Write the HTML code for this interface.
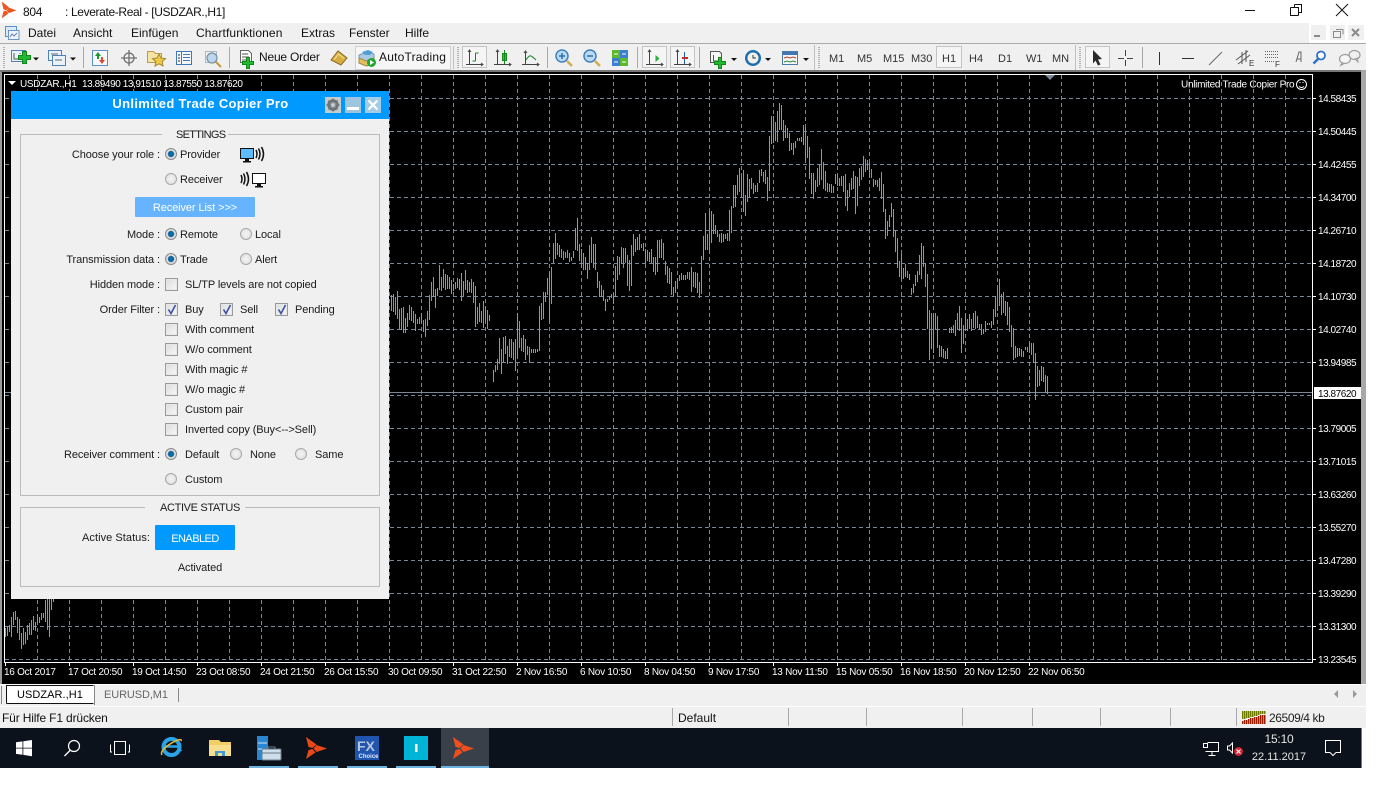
<!DOCTYPE html>
<html><head><meta charset="utf-8"><title>Leverate-Real</title>
<style>
html,body{margin:0;padding:0;background:#fff}
body{width:1400px;height:806px;position:relative;overflow:hidden;font-family:"Liberation Sans",Arial,sans-serif;font-size:12px;color:#111}
.a{position:absolute}
.t{position:absolute;white-space:nowrap;line-height:14px}
.p{font-size:11px;color:#1a1a1a;letter-spacing:-.1px}
.cb{position:absolute;width:11px;height:11px;border:1px solid #9a9a9a;background:linear-gradient(135deg,#dcdcdc,#f8f8f8);box-shadow:inset 0 0 0 1px #e8e8e8}
.r{position:absolute;width:10px;height:10px;border:1px solid #a8a8a8;border-radius:50%;background:radial-gradient(circle at 50% 50%,#f4f4f4,#dcdcdc)}
.r.on{border-color:#8a8a8a;background:radial-gradient(circle at 50% 50%,#0f76b8 0,#0a5f98 38%,#dfdfdf 50%,#dcdcdc 100%)}
svg{position:absolute;left:0;top:0}
svg text{font-family:"Liberation Sans",Arial,sans-serif}
.tf{font-size:11px;color:#333}
</style></head><body>
<!-- window backgrounds -->
<div class="a" style="left:0;top:23px;width:1309px;height:21px;background:#f0f0f0"></div>
<div class="a" style="left:0;top:43px;width:1366px;height:27px;background:#f0f0f0;border-top:1px solid #aaa;box-sizing:border-box"></div>
<div class="a" style="left:0;top:70px;width:1366px;height:2px;background:#777"></div>
<div class="a" style="left:0;top:72px;width:1366px;height:612px;background:#000"></div>
<div class="a" style="left:0;top:72px;width:2px;height:612px;background:#9a9a9a"></div>
<div class="a" style="left:1361px;top:70px;width:5px;height:615px;background:#a8a8a8"></div>
<div class="a" style="left:0;top:684px;width:1366px;height:22px;background:#f0f0f0;border-top:1px solid #fff;box-sizing:border-box"></div>
<div class="a" style="left:0;top:706px;width:1366px;height:22px;background:#f0f0f0;border-top:1px solid #fff;box-sizing:border-box"></div>
<div class="a" style="left:0;top:728px;width:1362px;height:40px;background:#0c121c"></div>
<div class="a" style="left:1361px;top:728px;width:1px;height:40px;background:#777"></div>

<!-- chart -->
<svg width="1400" height="806" viewBox="0 0 1400 806">
<g stroke="#778899" stroke-width="1" stroke-dasharray="4 3" fill="none">
<path d="M5 98.5H1312M5 131.5H1312M5 164.5H1312M5 197.5H1312M5 230.5H1312M5 263.5H1312M5 296.5H1312M5 329.5H1312M5 362.5H1312M5 395.5H1312M5 428.5H1312M5 461.5H1312M5 494.5H1312M5 527.5H1312M5 560.5H1312M5 593.5H1312M5 626.5H1312M5 659.5H1312"/>
<path d="M37.5 75V662M69.5 75V662M101.5 75V662M133.5 75V662M165.5 75V662M197.5 75V662M229.5 75V662M261.5 75V662M293.5 75V662M325.5 75V662M357.5 75V662M389.5 75V662M421.5 75V662M453.5 75V662M485.5 75V662M517.5 75V662M549.5 75V662M581.5 75V662M613.5 75V662M645.5 75V662M677.5 75V662M709.5 75V662M741.5 75V662M773.5 75V662M805.5 75V662M837.5 75V662M869.5 75V662M901.5 75V662M933.5 75V662M965.5 75V662M997.5 75V662M1029.5 75V662M1061.5 75V662M1093.5 75V662M1125.5 75V662M1157.5 75V662M1189.5 75V662M1221.5 75V662M1253.5 75V662M1285.5 75V662"/>
</g>
<path stroke="#778899" stroke-width="1" d="M4 392.5H1312" fill="none"/>
<path stroke="#33e01f" stroke-width="1" fill="none" d="M5.5 628V637M7.5 626V636M9.5 625V632M11.5 617V637M13.5 612V625M15.5 611V620M17.5 617V633M19.5 619V640M21.5 633V649M23.5 628V645M25.5 632V644M27.5 625V640M29.5 623V635M31.5 620V635M33.5 616V630M35.5 622V631M37.5 614V623M39.5 617V623M41.5 613V620M43.5 613V618M45.5 600V622M47.5 598V630M49.5 599V637M51.5 598V610M53.5 598V602
M391.5 295V311M393.5 294V312M395.5 297V315M397.5 291V319M399.5 309V329M401.5 308V330M403.5 307V333M405.5 318V333M407.5 313V327M409.5 305V320M411.5 307V321M413.5 311V323M415.5 314V331M417.5 319V324M419.5 317V324M421.5 314V323M423.5 320V332M425.5 319V337M427.5 311V326M429.5 295V320M431.5 282V301M433.5 277V297M435.5 289V308M437.5 288V296M439.5 265V290M441.5 277V291M443.5 269V288M445.5 274V290M447.5 275V289M449.5 277V289M451.5 280V294M453.5 284V291M455.5 282V289M457.5 278V288M459.5 279V290M461.5 273V301M463.5 281V296M465.5 270V290M467.5 280V293M469.5 282V292M471.5 279V293M473.5 282V303M475.5 286V327M477.5 307V324M479.5 303V322M481.5 311V323M483.5 301V328M485.5 307V322M487.5 310V329M489.5 315V321
M493.5 370V382M495.5 365V372M497.5 359V370M499.5 338V364M501.5 349V374M503.5 337V362M505.5 336V354M507.5 346V364M509.5 339V357M511.5 339V358M513.5 342V360M515.5 339V371M517.5 313V358M519.5 321V348M521.5 338V351M523.5 335V352M525.5 339V360M527.5 346V355M529.5 347V363M531.5 349V353M533.5 349V353M535.5 349V353M537.5 349V352M539.5 306V351M541.5 303V320M543.5 292V319M545.5 292V302M547.5 278V295M549.5 272V322M551.5 267V304M553.5 243V263M555.5 233V259M557.5 243V255M559.5 245V257M561.5 249V258M563.5 251V260M565.5 252V258M567.5 250V258M569.5 253V262M571.5 257V261M573.5 251V258M575.5 228V250M577.5 218V251M579.5 244V261M581.5 249V268M583.5 253V270M585.5 257V270M587.5 263V279M589.5 245V270M591.5 237V263M593.5 244V268M595.5 244V270M597.5 272V288M599.5 281V297M601.5 285V297M603.5 290V301M605.5 299V311M607.5 299V302M609.5 297V300M611.5 294V298M613.5 293V304M615.5 266V297M617.5 256V280M619.5 257V275M621.5 247V264M623.5 248V268M625.5 248V263M627.5 255V286M629.5 260V291M631.5 245V286M633.5 234V256M635.5 239V252M637.5 237V250M639.5 234V250M641.5 244V248M643.5 243V251M645.5 249V263M647.5 250V261M649.5 252V262M651.5 249V263M653.5 257V272M655.5 257V275M657.5 240V272M659.5 240V258M661.5 239V258M663.5 243V260M665.5 261V275M667.5 266V283M669.5 268V284M671.5 272V295M673.5 287V296M675.5 281V293M677.5 278V288M679.5 275V281M681.5 273V280M683.5 275V280M685.5 275V280M687.5 272V279M689.5 272V280M691.5 267V292M693.5 272V287M695.5 272V288M697.5 273V293M699.5 282V298M701.5 256V294
M703.5 236V260M705.5 213V250M707.5 234V250M709.5 211V252M711.5 211V243M713.5 214V234M715.5 225V234M717.5 230V237M719.5 234V242M721.5 233V243M723.5 234V242M725.5 234V239M727.5 233V241M729.5 210V241M731.5 206V233M733.5 185V208M735.5 185V207M737.5 175V195M739.5 168V192M741.5 176V197M743.5 170V212M745.5 195V216M747.5 174V202M749.5 179V197M751.5 178V189M753.5 183V194M755.5 185V192M757.5 183V192M759.5 170V183M761.5 169V176M763.5 172V182M765.5 170V184M767.5 177V201M769.5 136V191M771.5 116V144M773.5 116V143M775.5 122V141M777.5 111V142M779.5 103V130M781.5 105V130M783.5 120V141M785.5 125V138M787.5 128V138M789.5 133V151M791.5 143V150M793.5 143V155M795.5 141V148M797.5 138V141M799.5 138V141M801.5 137V142M803.5 125V145M805.5 128V161M807.5 136V158M809.5 147V179M811.5 173V194M813.5 173V199M815.5 180V192M817.5 168V187M819.5 165V185M821.5 149V180M823.5 162V189M825.5 171V191M827.5 183V192M829.5 184V192M831.5 184V193M833.5 186V193M835.5 174V184M837.5 175V186M839.5 178V186M841.5 176V186M843.5 176V192M845.5 174V206M847.5 190V211M849.5 183V197M851.5 178V190M853.5 171V189M855.5 176V214M857.5 177V206M859.5 168V186M861.5 166V180M863.5 156V177M865.5 159V172M867.5 160V170M869.5 162V178M871.5 169V178M873.5 179V187M875.5 180V185M877.5 180V187M879.5 178V191M881.5 172V199M883.5 184V212M885.5 209V239M887.5 221V236M889.5 215V227M891.5 203V217M893.5 209V237M895.5 230V252M897.5 238V268
M899.5 261V277M901.5 254V279M903.5 268V279M905.5 264V277M907.5 271V278M909.5 274V280M911.5 288V295M913.5 284V293M915.5 275V286M917.5 271V282M919.5 255V275M921.5 243V279M923.5 246V267M925.5 263V287M927.5 274V329M929.5 310V360M931.5 313V349M933.5 314V353M935.5 313V330M937.5 316V348M939.5 345V357M941.5 346V357M943.5 349V358M945.5 351V359M947.5 348V359M949.5 328V333M951.5 327V333M953.5 325V333M955.5 320V336M957.5 313V329M959.5 306V331M961.5 318V353M963.5 325V344M965.5 314V331M967.5 319V331M969.5 314V329M971.5 319V331M973.5 313V328M975.5 311V329M977.5 316V328M979.5 324V329M981.5 324V335M983.5 329V334M985.5 321V332M987.5 323V325M989.5 323V325M991.5 321V328M993.5 309V325M995.5 296V317M997.5 289V311M999.5 279V306M1001.5 294V315M1003.5 292V313M1005.5 301V316M1007.5 302V325M1009.5 307V332M1011.5 325V347M1013.5 328V360M1015.5 346V358M1017.5 348V357M1019.5 348V356M1021.5 349V357M1023.5 351V357M1025.5 347V350M1027.5 347V352M1029.5 343V353M1031.5 343V355M1033.5 343V363M1035.5 353V400M1037.5 366V387M1039.5 370V386M1041.5 366V381M1043.5 367V382M1045.5 375V393M1047.5 376V394"/>
<!-- frame -->
<path stroke="#fff" stroke-width="1" fill="none" d="M4.5 74.5H1312.5V662.5H4.5Z"/>
<path stroke="#fff" stroke-width="1" fill="none" d="M1312 98.5h4M1312 131.5h4M1312 164.5h4M1312 197.5h4M1312 230.5h4M1312 263.5h4M1312 296.5h4M1312 329.5h4M1312 362.5h4M1312 428.5h4M1312 461.5h4M1312 494.5h4M1312 527.5h4M1312 560.5h4M1312 593.5h4M1312 626.5h4M1312 659.5h4M5.5 662v4M69.5 662v4M133.5 662v4M197.5 662v4M261.5 662v4M325.5 662v4M389.5 662v4M453.5 662v4M517.5 662v4M581.5 662v4M645.5 662v4M709.5 662v4M773.5 662v4M837.5 662v4M901.5 662v4M965.5 662v4M1029.5 662v4"/>
<path fill="#778899" d="M1045 75h10l-5 5z"/>
<path fill="#fff" d="M8 81h8l-4 4z"/>
<rect x="1314" y="387" width="47" height="12" fill="#fff"/>
<g fill="#fff" font-size="10" letter-spacing="-.45">
<text x="1318" y="102">14.58435</text><text x="1318" y="135">14.50445</text><text x="1318" y="168">14.42455</text><text x="1318" y="201">14.34700</text><text x="1318" y="234">14.26710</text><text x="1318" y="267">14.18720</text><text x="1318" y="300">14.10730</text><text x="1318" y="333">14.02740</text><text x="1318" y="366">13.94985</text><text x="1318" y="397" fill="#000">13.87620</text><text x="1318" y="432">13.79005</text><text x="1318" y="465">13.71015</text><text x="1318" y="498">13.63260</text><text x="1318" y="531">13.55270</text><text x="1318" y="564">13.47280</text><text x="1318" y="597">13.39290</text><text x="1318" y="630">13.31300</text><text x="1318" y="663">13.23545</text>
</g>
<g fill="#fff" font-size="10" letter-spacing="-.25">
<text x="4" y="675">16 Oct 2017</text><text x="68" y="675">17 Oct 20:50</text><text x="132" y="675">19 Oct 14:50</text><text x="196" y="675">23 Oct 08:50</text><text x="260" y="675">24 Oct 21:50</text><text x="324" y="675">26 Oct 15:50</text><text x="388" y="675">30 Oct 09:50</text><text x="452" y="675">31 Oct 22:50</text><text x="516" y="675">2 Nov 16:50</text><text x="580" y="675">6 Nov 10:50</text><text x="644" y="675">8 Nov 04:50</text><text x="708" y="675">9 Nov 17:50</text><text x="772" y="675">13 Nov 11:50</text><text x="836" y="675">15 Nov 05:50</text><text x="900" y="675">16 Nov 18:50</text><text x="964" y="675">20 Nov 12:50</text><text x="1028" y="675">22 Nov 06:50</text>
<text x="20" y="87" letter-spacing="-.3">USDZAR.,H1</text><text x="82" y="87" letter-spacing="-.42">13.89490 13,91510 13.87550 13.87620</text>
<text x="1181" y="87.5" letter-spacing="-.28">Unlimited Trade Copier Pro</text>
</g>
<g fill="none" stroke="#fff"><circle cx="1301.5" cy="84.5" r="5"/><path d="M1299 86.500q2.500 2 5 0" stroke-width=".9"/><path d="M1299.500 82.500h1M1302.500 82.500h1"/></g>
</svg>

<!-- title bar text -->
<div class="t" style="left:23px;top:5px;letter-spacing:-.3px">804</div>
<div class="t" style="left:65px;top:5px;letter-spacing:-.36px">: Leverate-Real - [USDZAR.,H1]</div>
<!-- menu -->
<div class="t" style="left:28px;top:26px">Datei</div>
<div class="t" style="left:73px;top:26px">Ansicht</div>
<div class="t" style="left:131px;top:26px">Einfügen</div>
<div class="t" style="left:196px;top:26px;letter-spacing:.12px">Chartfunktionen</div>
<div class="t" style="left:301px;top:26px">Extras</div>
<div class="t" style="left:349px;top:26px">Fenster</div>
<div class="t" style="left:405px;top:26px">Hilfe</div>

<!-- toolbar buttons -->
<div class="a" style="left:355px;top:46px;width:94px;height:22px;border:1px solid #d0d0d0;background:#f6f6f6"></div>
<div class="a" style="left:462px;top:46px;width:25px;height:22px;border:1px solid #c4c4c4;background:#f5f5f5;box-sizing:border-box"></div>
<div class="a" style="left:642px;top:46px;width:25px;height:22px;border:1px solid #c4c4c4;background:#f5f5f5;box-sizing:border-box"></div>
<div class="a" style="left:670px;top:46px;width:25px;height:22px;border:1px solid #c4c4c4;background:#f5f5f5;box-sizing:border-box"></div>
<div class="a" style="left:936px;top:46px;width:26px;height:22px;border:1px solid #c4c4c4;background:#f5f5f5;box-sizing:border-box"></div>
<div class="a" style="left:1085px;top:46px;width:25px;height:22px;border:1px solid #c4c4c4;background:#f5f5f5;box-sizing:border-box"></div>
<div class="a" style="left:1310px;top:24px;width:17px;height:17px;border:1px solid #fff;box-sizing:border-box;background:#f0f0f0"></div>
<div class="a" style="left:1329px;top:24px;width:17px;height:17px;border:1px solid #fff;box-sizing:border-box;background:#f0f0f0"></div>
<div class="a" style="left:1347px;top:24px;width:18px;height:17px;border:1px solid #fff;box-sizing:border-box;background:#f0f0f0"></div>

<div class="t" style="left:259px;top:50px;letter-spacing:-.2px">Neue Order</div>
<div class="t" style="left:379px;top:50px;letter-spacing:.2px">AutoTrading</div>
<div class="t tf" style="left:829px;top:52px">M1</div>
<div class="t tf" style="left:857px;top:52px">M5</div>
<div class="t tf" style="left:883px;top:52px">M15</div>
<div class="t tf" style="left:911px;top:52px">M30</div>
<div class="t tf" style="left:942px;top:52px">H1</div>
<div class="t tf" style="left:969px;top:52px">H4</div>
<div class="t tf" style="left:998px;top:52px">D1</div>
<div class="t tf" style="left:1026px;top:52px">W1</div>
<div class="t tf" style="left:1052px;top:52px">MN</div>

<!-- icons -->
<svg width="1400" height="806" viewBox="0 0 1400 806">
<defs>
<g id="lev"><path d="M0 0L10.500 7.500 6.500 11 2.500 10z"/><path d="M10.500 8L21 11.500 10.500 15 7.500 11.500z"/><path d="M0 22L2.500 13 6.500 12 9.500 15.500z"/></g>
</defs>
<use href="#lev" transform="translate(2,2) scale(.66,.73)" fill="#ea5620" stroke="#ea5620" stroke-width=".6"/>
<!-- window controls -->
<path stroke="#111" fill="none" d="M1245 10.500h10M1290.500 7.500h8v8M1294.500 4.500h7v8h-3M1290.500 7.500v8h8M1294.500 4.500v3M1336 4l12 12M1348 4l-12 12"/>
<!-- mdi -->
<path d="M1314 35h6v2h-6z" fill="#8a8a8a"/>
<path d="M1333.500 31.500h7v6h-7zM1336 29.500h7v5" stroke="#8a8a8a" fill="none"/>
<path d="M1352 29l7 7M1359 29l-7 7" stroke="#8a8a8a" stroke-width="2" fill="none"/>
<!-- menu icon -->
<rect x="5.500" y="26.500" width="11" height="10" fill="#dbe9f8" stroke="#5c90c8"/><rect x="8.500" y="30.500" width="10.500" height="9" fill="#eef4fb" stroke="#6a95c4"/><path d="M10 37l2-3 2 2 3-3" stroke="#6a80a8" fill="none"/>
<!-- grips -->
<path stroke="#b0b0b0" stroke-width="2" stroke-dasharray="1 1" fill="none" d="M4 47V68M458 47V68M819 47V68M1080 47V68"/>
<!-- seps -->
<path stroke="#a8a8a8" fill="none" d="M83.500 47V68M229.500 47V68M547.500 47V68M637.500 47V68M699.500 47V68M1142.500 47V68"/>
<path stroke="#c0c0c0" fill="none" d="M453.500 46V69M814.500 45V70M1075.500 45V70"/>
<!-- new chart -->
<g fill="none" stroke="#4f81b8"><rect x="11.500" y="50.500" width="14" height="11" fill="#eaf2fa"/></g>
<path stroke="#555" fill="none" d="M14 53v6h8M20 54v-1"/>
<path d="M22.500 51.500h4v4h4v4h-4v4h-4v-4h-4v-4h4z" fill="#22b830" stroke="#0f8a1a"/>
<path d="M33 57.500h6l-3 3z" fill="#111"/>
<!-- tile -->
<rect x="48.500" y="50.500" width="13" height="10" fill="#eaf2fa" stroke="#4f81b8"/><rect x="52.500" y="55.500" width="13" height="10" fill="#eaf2fa" stroke="#4f81b8"/><path d="M51 54h7M55 60h7" stroke="#666"/>
<path d="M70 57.500h6l-3 3z" fill="#111"/>
<!-- market watch -->
<rect x="92.500" y="50.500" width="15" height="15" fill="#f7f9fc" stroke="#5a90c8"/><path d="M98 52l-3 4h2v3h2v-3h2z" fill="#1d9a2a"/><path d="M102 64l3-4h-2v-3h-2v3h-2z" fill="#d84c30"/>
<!-- crosshair -->
<circle cx="129" cy="58" r="5" fill="none" stroke="#6f6f6f" stroke-width="1.300"/><path d="M129 50v16M121 58h16" stroke="#6f6f6f" stroke-width="1.300"/>
<!-- folder star -->
<path d="M147.500 51.500h6l2 2h6v9h-14z" fill="#f5e2a4" stroke="#bd9a4e"/><path d="M159 54l2 4 4.500.6-3.300 3 .8 4.400-4-2.200-4 2.200.8-4.400-3.300-3 4.500-.6z" fill="#eec84a" stroke="#a88a2e"/>
<!-- list -->
<rect x="176.500" y="51.500" width="15" height="13" fill="#f6f9fd" stroke="#3f78b5"/><path d="M181.500 52v12M183 54.500h7M183 57.500h7M183 60.500h7" stroke="#3f78b5"/><path d="M178 55h2M178 58h2M178 61h2" stroke="#223"/>
<!-- magnifier -->
<rect x="205.500" y="51.500" width="11" height="11" fill="#eef2f6" stroke="#b0b8c0"/><circle cx="212" cy="58" r="5" fill="#bcd6ee" stroke="#7a8ea0" stroke-width="1.200"/><path d="M216 62l5 5" stroke="#c49a3a" stroke-width="2"/>
<!-- new order -->
<path d="M240.500 50.500h8l3 3v9h-11z" fill="#fbfbfb" stroke="#666"/><path d="M242 54h6M242 57h7M242 60h5" stroke="#555"/>
<path d="M246.500 57.500h3v4h4v3h-4v4h-3v-4h-4v-3h4z" fill="#22b830" stroke="#0f8a1a"/>
<!-- gold -->
<path d="M331 60l7-9 9 7-6 7z" fill="#d8ad44" stroke="#8a6a22"/><path d="M334 59.500l4.500-5.500 5.500 4.500" stroke="#f4e08a" fill="none"/>
<!-- autotrading -->
<path d="M359 55l8-3 7 2v9l-7 3-8-3z" fill="#a9c9e4" stroke="#7c9cb8"/><path d="M362 52l6-2 5 2-3 3-5 0z" fill="#4f9fd8"/><path d="M359 58l7 3 8-3v5l-8 3-7-3z" fill="#e0c060" stroke="#a08a40"/>
<circle cx="371.500" cy="62.500" r="4.500" fill="#1ea832"/><path d="M370 60l4 2.500-4 2.500z" fill="#fff"/>
<!-- chart type -->
<g stroke="#444" fill="none">
<path d="M469.500 50v14M466 64.500h16M468 52l1.500-2 1.500 2M481 63l2 1.500-2 1.500"/>
<path d="M497.500 50v14M494 64.500h16M496 52l1.500-2 1.500 2M509 63l2 1.500-2 1.500"/>
<path d="M525.500 51v13M522 64.500h16M524 53l1.500-2 1.500 2M537 63l2 1.500-2 1.500"/>
<path d="M649.500 50v14M646 64.500h16M648 52l1.500-2 1.500 2M661 63l2 1.500-2 1.500"/>
<path d="M677.500 50v14M674 64.500h16M676 52l1.500-2 1.500 2M689 63l2 1.500-2 1.500"/>
</g>
<path d="M475.500 53v8M475.500 53h3M472.500 61h3" stroke="#138a1c" fill="none"/>
<rect x="502.500" y="53.500" width="4" height="7" fill="#22cc33" stroke="#138a1c"/><path d="M504.500 50v14" stroke="#138a1c"/>
<path d="M526 60q3-5 5-4t5 4" stroke="#2f8a40" fill="none" stroke-width="1.200"/>
<path d="M655.500 55v7l4-3.500z" fill="#27b03a"/><path d="M684.500 52v12" stroke="#245ea8"/><path d="M682 58h6" stroke="#c03020" stroke-width="2"/>
<!-- zoom -->
<circle cx="562" cy="56" r="6" fill="#bcd9f2" stroke="#3e80bc" stroke-width="1.500"/><path d="M559 56h6M562 53v6" stroke="#2a6fb0" stroke-width="1.500"/><path d="M567 61l5 5" stroke="#d0ae50" stroke-width="2.500"/>
<circle cx="590" cy="56" r="6" fill="#bcd9f2" stroke="#3e80bc" stroke-width="1.500"/><path d="M587 56h6" stroke="#2a6fb0" stroke-width="1.500"/><path d="M595 61l5 5" stroke="#d0ae50" stroke-width="2.500"/>
<!-- tile windows -->
<rect x="612" y="50" width="8" height="8" fill="#5cb82c"/><rect x="620" y="50" width="8" height="8" fill="#3a7fd0"/><rect x="612" y="58" width="8" height="8" fill="#3a7fd0"/><rect x="620" y="58" width="8" height="8" fill="#5cb82c"/><path d="M614 54h4M622 54h4M614 62h4M622 62h4" stroke="#fff"/>
<!-- add indicator -->
<path d="M710.500 51.500h9l2 2v9h-11z" fill="#f7f7f7" stroke="#555"/><path d="M713.500 55v6h6" stroke="#555" fill="none"/>
<path d="M718.500 57.500h3v4h4v3h-4v4h-3v-4h-4v-3h4z" fill="#22b830" stroke="#0f8a1a"/>
<path d="M731 58h6l-3 3z" fill="#111"/>
<!-- clock -->
<circle cx="753" cy="58" r="8" fill="#1d6fb0"/><circle cx="753" cy="58" r="5.500" fill="#f2f2ea"/><path d="M753 55v3h3" stroke="#333" fill="none"/>
<path d="M765 58h6l-3 3z" fill="#111"/>
<!-- template -->
<rect x="782.500" y="51.500" width="15" height="13" fill="#f5f5f5" stroke="#4a7aa8"/><rect x="783" y="52" width="14" height="3" fill="#3f78b5"/><path d="M784 58l3-1 3 1 3-1 3 1" stroke="#b04020" fill="none"/><path d="M784 62l3-1 3 1 3-1 3 1" stroke="#2f8a30" fill="none"/>
<path d="M803 58h6l-3 3z" fill="#111"/>
<!-- cursor -->
<path d="M1093 50l9 9-4 .5 2.500 5-2.500 1-2.500-5-2.500 3z" fill="#2a2a2a"/>
<path d="M1125.500 50v6M1125.500 60v6M1118 58.500h6M1127 58.500h6" stroke="#444" fill="none"/>
<path d="M1159.500 52v13" stroke="#333"/><path d="M1182 58.500h12" stroke="#333"/><path d="M1209 65l13-13" stroke="#666"/>
<path d="M1236 60l12-9M1238 64l12-9M1242 52v12M1246 50v12" stroke="#555" fill="none"/>
<path d="M1265 51.500h13M1265 54.500h13M1265 57.500h13M1265 61.500h9" stroke="#666" stroke-dasharray="1 1" fill="none"/>
<path d="M1296 62l3-10h2v10M1297 59h4" stroke="#666" fill="none"/>
<circle cx="1321" cy="55.500" r="4" fill="#fff" stroke="#2f72c4" stroke-width="1.800"/><path d="M1318 59l-4.500 4.500" stroke="#2f72c4" stroke-width="2.500"/>
<!-- chat bubbles -->
<ellipse cx="1354.500" cy="55" rx="5.500" ry="4.500" fill="#f0f0f0" stroke="#9a9a9a" stroke-width="1.200"/><path d="M1355 59l3 3-.5-4z" fill="#d8d8d8" stroke="#9a9a9a"/>
<ellipse cx="1345" cy="59" rx="5.500" ry="4.500" fill="#f6f6f6" stroke="#9a9a9a" stroke-width="1.200"/><path d="M1342 63l-1.500 2.500 4-2z" fill="#f6f6f6" stroke="#9a9a9a"/>
<text x="1249" y="66" font-size="8" fill="#333">E</text><text x="1275" y="67" font-size="8" fill="#333">F</text>

<!-- tabs -->
<path d="M6 704V685H94V704" fill="#fff"/>
<path stroke="#111" fill="none" d="M6.500 703.500V685.500H93.500M6.500 703.500H93.500"/><path stroke="#888" d="M94.500 685v20M1.500 686v18"/>
<path stroke="#888" d="M178.500 688v14"/>
<path d="M1338 690v8l-4-4z" fill="#999"/><path d="M1353 690v8l4-4z" fill="#999"/>
<!-- status bar -->
<path stroke="#a8a8a8" fill="none" d="M672.500 708v18M788.500 708v18M866.500 708v18M962.500 708v18M1032.500 708v18M1100.500 708v18M1170.500 708v18M1236.500 708v18"/>
<g fill="#6e7c00"><rect x="1242" y="711" width="1.500" height="8"/><rect x="1244" y="711" width="1.500" height="8"/><rect x="1246" y="711" width="1.500" height="7"/><rect x="1248" y="711" width="1.500" height="7"/><rect x="1250" y="711" width="1.500" height="6"/><rect x="1252" y="711" width="1.500" height="6"/><rect x="1254" y="711" width="1.500" height="5"/><rect x="1256" y="711" width="1.500" height="5"/><rect x="1258" y="711" width="1.500" height="4"/><rect x="1260" y="711" width="1.500" height="3"/><rect x="1262" y="711" width="1.500" height="3"/><rect x="1264" y="711" width="1.500" height="3"/></g>
<g fill="#9a1c00"><rect x="1242" y="721" width="1.500" height="3"/><rect x="1244" y="720" width="1.500" height="4"/><rect x="1246" y="720" width="1.500" height="4"/><rect x="1248" y="719" width="1.500" height="5"/><rect x="1250" y="718" width="1.500" height="6"/><rect x="1252" y="718" width="1.500" height="6"/><rect x="1254" y="717" width="1.500" height="7"/><rect x="1256" y="717" width="1.500" height="7"/><rect x="1258" y="716" width="1.500" height="8"/><rect x="1260" y="715" width="1.500" height="9"/><rect x="1262" y="715" width="1.500" height="9"/><rect x="1264" y="715" width="1.500" height="9"/></g>
<!-- taskbar -->
<path d="M16 742.300l6.500-.9v6.300H16zM23.300 741.300l8.700-1.300v7.700h-8.700zM16 748.500h6.500v6.300l-6.500-.9zM23.300 748.500H32v7.700l-8.700-1.300z" fill="#fff"/>
<circle cx="74" cy="746" r="5.500" fill="none" stroke="#fff" stroke-width="1.200"/><path d="M70 750.500l-5.500 5.500" stroke="#fff" stroke-width="1.300"/>
<path d="M114.500 741.500h11v13h-11zM110.500 744.500v7.500h1.500M129.500 744.500v7.500h-1.500" fill="none" stroke="#fff"/>
<circle cx="171.500" cy="747" r="8" fill="none" stroke="#2aa4e8" stroke-width="4"/><path d="M164 746.500h15" stroke="#2aa4e8" stroke-width="2.500"/><path d="M177 750h5v1h-5z" fill="#2aa4e8"/><path d="M162 755q-2-3 4-8t12-7q4-1 3 1" fill="none" stroke="#e8b830" stroke-width="1.500"/>
<path d="M209 740h10l2 2h10v14h-22z" fill="#f2cd64"/><path d="M209 745h22v11h-22z" fill="#f8de8c"/><rect x="215" y="751" width="10" height="5" fill="#3f9ad8"/><rect x="218" y="753" width="4" height="3" fill="#f8de8c"/>
<rect x="257" y="736" width="11" height="24" fill="#2a86d0"/><path d="M258 743h9M258 749h9" stroke="#cfe5f6"/><rect x="262" y="749" width="19" height="11" rx="1" fill="#cfdde8" stroke="#6a7c8c"/><path d="M268 749v-2h7v2M262 753h19" stroke="#6a7c8c" fill="none"/>
<use href="#lev" transform="translate(306,737)" fill="#e8481a"/>
<rect x="355" y="736" width="24" height="24" fill="#1f55ae"/><text x="357" y="751" font-size="14" font-weight="bold" fill="#b8c6dc">FX</text><text x="358.500" y="758" font-size="6" font-weight="bold" fill="#dfe8f5">Choice</text>
<rect x="404" y="736" width="24" height="24" fill="#00b4d8"/><rect x="415" y="744" width="2.500" height="8" fill="#fff"/>
<rect x="441" y="728" width="48" height="40" fill="#39404a"/>
<use href="#lev" transform="translate(453,737)" fill="#ef4f1c"/>
<path fill="#6cb2de" d="M249 766h40v2h-40zM298 766h40v2h-40zM347 766h40v2h-40zM396 766h40v2h-40zM441 766h48v2h-48z"/>
<!-- tray -->
<path d="M1207.500 742.500h11v9h-13M1205.500 743h0M1212 752v3M1208.500 755.500h7" fill="none" stroke="#fff"/><rect x="1203.500" y="743.500" width="4" height="4" fill="#0c121c" stroke="#fff"/>
<path d="M1227.500 746v4h2l3 3v-10l-3 3z" fill="none" stroke="#fff"/>
<circle cx="1238.500" cy="751.500" r="4.500" fill="#d32030"/><path d="M1236.500 749.500l4 4M1240.500 749.500l-4 4" stroke="#fff" stroke-width="1.200"/>
<path d="M1325.500 740.500h15v12h-4.500l-3 3-3-3h-4.500z" fill="none" stroke="#fff"/>
</svg>

<!-- tabs / status text -->
<div class="t" style="left:17px;top:688px;color:#000;font-size:11px;letter-spacing:.05px">USDZAR.,H1</div>
<div class="t" style="left:104px;top:688px;color:#666;font-size:11px;letter-spacing:-.1px">EURUSD,M1</div>
<div class="t" style="left:2px;top:711px;letter-spacing:-.15px">Für Hilfe F1 drücken</div>
<div class="t" style="left:678px;top:711px">Default</div>
<div class="t" style="left:1269px;top:711px;color:#222;letter-spacing:-.4px">26509/4 kb</div>
<div class="t" style="left:1259px;top:732px;width:40px;text-align:center;color:#e6e6e6;letter-spacing:-.2px">15:10</div>
<div class="t" style="left:1249px;top:750px;width:60px;text-align:center;color:#e6e6e6;font-size:11px">22.11.2017</div>

<!-- panel -->
<div class="a" style="left:11px;top:91px;width:378px;height:508px;background:#f0f0f0"></div>
<div class="a" style="left:11px;top:91px;width:378px;height:28px;background:#0099ff"></div>
<div class="t" style="left:11px;top:97px;width:378px;text-align:center;color:#fff;font-weight:bold;font-size:13px;letter-spacing:.33px;text-indent:1px">Unlimited Trade Copier Pro</div>
<svg width="1400" height="806" viewBox="0 0 1400 806">
<rect x="325" y="97" width="16" height="16" fill="#c6cbce"/><circle cx="333" cy="105" r="4.500" fill="none" stroke="#6d7478" stroke-width="2.500"/><path d="M333 98.500v13M326.500 105h13M328.500 100.500l9 9M337.500 100.500l-9 9" stroke="#6d7478" stroke-width="1.500"/><circle cx="333" cy="105" r="2" fill="#c6cbce"/>
<rect x="345" y="97" width="16" height="16" fill="#9fc4de"/><rect x="347" y="107" width="12" height="3" fill="#fff"/>
<rect x="365" y="97" width="16" height="16" fill="#a4cbe4"/><path d="M368.500 100.500l9 9M377.500 100.500l-9 9" stroke="#fff" stroke-width="2.200"/>
<path d="M20.500 134.500H162M228 134.500H379.500V495.500H20.500V134.500M20.500 507.500H145M245 507.500H379.500V586.500H20.500V507.500" fill="none" stroke="#bbb"/>
<!-- monitors -->
<rect x="240.500" y="148.500" width="13" height="10" fill="#5cbcff" stroke="#111"/><path d="M245 159h4v2h2v1.500h-8v-1.500h2z" fill="#111"/>
<path d="M256 150q2 4 0 8M258.500 148.500q3 5.500 0 11M261.500 147q4 7 0 14" fill="none" stroke="#111" stroke-width="1.500"/>
<rect x="252.500" y="173.500" width="13" height="10" fill="#fff" stroke="#111"/><path d="M257 184h4v2h2v1.500h-8v-1.500h2z" fill="#111"/>
<path d="M241 175q2 4 0 8M243.500 173.500q3 5.500 0 11M246.500 172q4 7 0 14" fill="none" stroke="#111" stroke-width="1.500"/>
</svg>
<div class="t p" style="left:176px;top:128px;letter-spacing:-.7px">SETTINGS</div>
<div class="t p" style="left:160px;top:501px;letter-spacing:-.35px">ACTIVE STATUS</div>

<div class="t p" style="left:20px;top:148px;width:140px;text-align:right">Choose your role :</div>
<div class="r on" style="left:165px;top:148px"></div><div class="t p" style="left:180px;top:148px">Provider</div>
<div class="r" style="left:165px;top:173px"></div><div class="t p" style="left:180px;top:173px">Receiver</div>
<div class="a" style="left:135px;top:197px;width:120px;height:20px;background:#66b3ff;border-radius:1px"></div>
<div class="t p" style="left:135px;top:201px;width:120px;text-align:center;color:#fff">Receiver List &gt;&gt;&gt;</div>
<div class="t p" style="left:20px;top:228px;width:140px;text-align:right">Mode :</div>
<div class="r on" style="left:165px;top:228px"></div><div class="t p" style="left:180px;top:228px">Remote</div>
<div class="r" style="left:240px;top:228px"></div><div class="t p" style="left:255px;top:228px">Local</div>
<div class="t p" style="left:20px;top:253px;width:140px;text-align:right">Transmission data :</div>
<div class="r on" style="left:165px;top:253px"></div><div class="t p" style="left:180px;top:253px">Trade</div>
<div class="r" style="left:240px;top:253px"></div><div class="t p" style="left:255px;top:253px">Alert</div>
<div class="t p" style="left:20px;top:278px;width:140px;text-align:right">Hidden mode :</div>
<div class="cb" style="left:165px;top:278px"></div><div class="t p" style="left:185px;top:278px">SL/TP levels are not copied</div>
<div class="t p" style="left:20px;top:303px;width:140px;text-align:right">Order Filter :</div>
<div class="cb" style="left:165px;top:303px"></div><div class="t p" style="left:185px;top:303px">Buy</div>
<div class="cb" style="left:220px;top:303px"></div><div class="t p" style="left:240px;top:303px">Sell</div>
<div class="cb" style="left:275px;top:303px"></div><div class="t p" style="left:295px;top:303px">Pending</div>
<div class="cb" style="left:165px;top:323px"></div><div class="t p" style="left:185px;top:323px">With comment</div>
<div class="cb" style="left:165px;top:343px"></div><div class="t p" style="left:185px;top:343px">W/o comment</div>
<div class="cb" style="left:165px;top:363px"></div><div class="t p" style="left:185px;top:363px">With magic #</div>
<div class="cb" style="left:165px;top:383px"></div><div class="t p" style="left:185px;top:383px">W/o magic #</div>
<div class="cb" style="left:165px;top:403px"></div><div class="t p" style="left:185px;top:403px">Custom pair</div>
<div class="cb" style="left:165px;top:423px"></div><div class="t p" style="left:185px;top:423px">Inverted copy (Buy&lt;--&gt;Sell)</div>
<div class="t p" style="left:20px;top:448px;width:140px;text-align:right">Receiver comment :</div>
<div class="r on" style="left:165px;top:448px"></div><div class="t p" style="left:185px;top:448px">Default</div>
<div class="r" style="left:230px;top:448px"></div><div class="t p" style="left:250px;top:448px">None</div>
<div class="r" style="left:295px;top:448px"></div><div class="t p" style="left:315px;top:448px">Same</div>
<div class="r" style="left:165px;top:473px"></div><div class="t p" style="left:185px;top:473px">Custom</div>
<div class="t p" style="left:20px;top:531px;width:130px;text-align:right;letter-spacing:.05px">Active Status:</div>
<div class="a" style="left:155px;top:525px;width:80px;height:25px;background:#0099ff;border-radius:1px"></div>
<div class="t p" style="left:155px;top:532px;width:80px;text-align:center;color:#fff;letter-spacing:-.55px">ENABLED</div>
<div class="t p" style="left:150px;top:561px;width:100px;text-align:center">Activated</div>
<svg width="1400" height="806" viewBox="0 0 1400 806">
<path d="M168.500 309.500l2.500 4 4.500-8.500M223.500 309.500l2.500 4 4.500-8.500M278.500 309.500l2.500 4 4.500-8.500" fill="none" stroke="#3d50a8" stroke-width="1.600"/>
</svg>
</body></html>
